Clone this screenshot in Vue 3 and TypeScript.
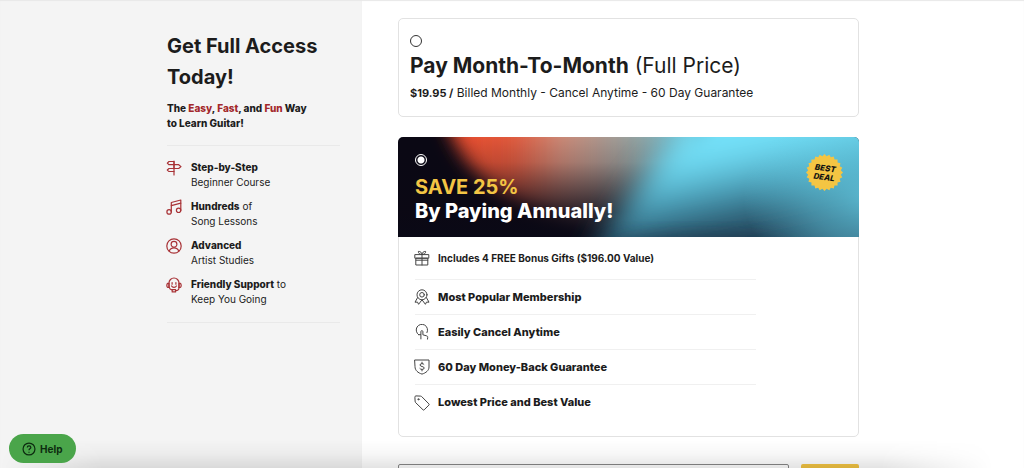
<script setup lang="ts">
import { ref } from 'vue'

interface Feature { icon: string; strong: string; after: string; second: string }

const plan = ref<'monthly' | 'annual'>('annual')
const email = ref('')

const features: Feature[] = [
  { icon: 'signpost', strong: 'Step-by-Step', after: '', second: 'Beginner Course' },
  { icon: 'music', strong: 'Hundreds', after: ' of', second: 'Song Lessons' },
  { icon: 'person', strong: 'Advanced', after: '', second: 'Artist Studies' },
  { icon: 'support', strong: 'Friendly Support', after: ' to', second: 'Keep You Going' },
]

const perks = [
  { icon: 'gift', text: 'Includes 4 FREE Bonus Gifts ($196.00 Value)' },
  { icon: 'ribbon', text: 'Most Popular Membership' },
  { icon: 'tap', text: 'Easily Cancel Anytime' },
  { icon: 'shield', text: '60 Day Money-Back Guarantee' },
  { icon: 'tag', text: 'Lowest Price and Best Value' },
]

const icons: Record<string, string[]> = {
  signpost: [
    'M8 1v14', 'M8 1.5H3L1.3 3.1 3 4.7h5z', 'M8 4.7h4.7L15 6.6l-2.3 1.9H8z', 'M8 8.5H3L1.3 10 3 11.5h5',
  ],
  music: [
    'M5.3 13V3.5L14.8 1v10.5', 'M5.3 6.6l9.5-2.5', 'M5.3 12.9a2.2 2.2 0 1 1-4.4 0 2.2 2.2 0 0 1 4.4 0z',
    'M14.8 11.3a2.2 2.2 0 1 1-4.4 0 2.2 2.2 0 0 1 4.4 0z',
  ],
  person: [
    'M15.2 8A7.2 7.2 0 1 1 .8 8a7.2 7.2 0 0 1 14.4 0z', 'M10.9 6.3a2.9 2.9 0 1 1-5.8 0 2.9 2.9 0 0 1 5.8 0z',
    'M3.3 13.2c.7-2.3 2.5-3.3 4.7-3.3s4 1 4.7 3.3',
  ],
  support: [
    'M3 10.5V6a5 5 0 0 1 10 0v4.5', 'M3 6.3H1.8Q.8 7 .8 8.4t1 2.1H3z', 'M13 6.3h1.2q1 .7 1 2.1t-1 2.1H13z',
    'M6.1 5.5v1.7M9.9 5.5v1.7', 'M5.6 9c.9 1.8 3.9 1.8 4.8 0', 'M3.2 10.3c.4 1.4 1.3 2.2 2.8 2.6',
    'M13 10.5c0 2-1.4 3.2-3.4 3.2', 'M6.2 12.6h3.4v2.3H6.2z',
  ],
  gift: [
    'M1.2 4.6h13.6v3.6H1.2z', 'M2.2 8.2h11.6V15H2.2z', 'M8 4.6V15', 'M2.2 10.2h11.6',
    'M8 4.4C5.6 4.4 4.2 3.4 4.4 1.4 6.4 1.3 7.8 2.4 8 4.4z', 'M8 4.4c2.4 0 3.8-1 3.6-3-2-.1-3.4 1-3.6 3z',
  ],
  ribbon: [
    'M13 5.8a5 5 0 1 1-10 0 5 5 0 0 1 10 0z', 'M10.3 5.8a2.3 2.3 0 1 1-4.6 0 2.3 2.3 0 0 1 4.6 0z',
    'M3.6 8.6L1 13.2l2.5-.1 1.1 2.2L8 10.8l3.4 4.5 1.1-2.2 2.5.1-2.6-4.6',
  ],
  tap: [
    'M4.6 10.7A5.7 5.7 0 1 1 13 8.6', 'M4.6 10.7H6.5',
    'M6.9 14.9V7.6c0-1.3 2-1.3 2 0v3.2l3.8 1.1c.9.3 1.1.8 1 1.6l-.2 1.6',
  ],
  shield: [
    'M1 1h14v7c0 3.4-3 5.9-7 7.1C4 13.9 1 11.4 1 8z', 'M10 5.3C9.6 4.4 6 4.1 6 6c0 2 4.2 1 4.2 3 0 2-3.9 1.7-4.4.6',
    'M8 3.2v1.3M8 10.6v1.3',
  ],
  tag: [
    'M.9 1.9Q.9.9 1.9.9l4.6.2q.7 0 1.2.5l7.2 7.3q.6.6 0 1.2l-4.7 4.7q-.6.6-1.2 0L1.6 7.6q-.5-.5-.5-1.2z',
    'M5 4.3a.6.6 0 1 1-1.2 0 .6.6 0 0 1 1.2 0z',
  ],
}

const sealPoints = Array.from({ length: 48 }, (_, i) => {
  const r = i % 2 ? 16 : 18
  const a = (i * Math.PI) / 24
  return `${(18 + r * Math.cos(a)).toFixed(2)},${(18 + r * Math.sin(a)).toFixed(2)}`
}).join(' ')
</script>

<template>
  <div class="page">
    <aside class="side">
      <div class="side-inner">
        <h1>Get Full Access Today!</h1>
        <p class="lead">The <em>Easy</em>, <em>Fast</em>, and <em>Fun</em> Way<br>to Learn Guitar!</p>
        <ul class="features">
          <li v-for="f in features" :key="f.icon">
            <svg class="icon" viewBox="0 0 16 16" aria-hidden="true">
              <path v-for="d in icons[f.icon]" :key="d" :d="d" />
            </svg>
            <span><strong>{{ f.strong }}</strong>{{ f.after }}<br>{{ f.second }}</span>
          </li>
        </ul>
      </div>
    </aside>

    <main class="main">
      <form class="plans" @submit.prevent>
        <label class="card monthly">
          <input v-model="plan" type="radio" name="plan" value="monthly">
          <span class="title"><strong>Pay Month-To-Month</strong> (Full Price)</span>
          <span class="billing"><strong>$19.95 /</strong> Billed Monthly - Cancel Anytime - 60 Day Guarantee</span>
        </label>

        <section class="card annual">
          <label class="banner">
            <svg class="glow" viewBox="0 0 461 100" preserveAspectRatio="none" aria-hidden="true">
              <defs>
                <linearGradient id="warm" gradientUnits="userSpaceOnUse" x1="50" y1="0" x2="280" y2="0">
                  <stop offset="0" stop-color="#e8492a" />
                  <stop offset=".28" stop-color="#e0593c" />
                  <stop offset=".5" stop-color="#c98a78" />
                  <stop offset=".8" stop-color="#95a09e" />
                  <stop offset="1" stop-color="#72aebb" />
                </linearGradient>
                <linearGradient id="warm-fade" x1="0" y1="0" x2="0" y2="1">
                  <stop offset="0" stop-color="#0b0814" stop-opacity="0" />
                  <stop offset=".25" stop-color="#0b0814" stop-opacity=".15" />
                  <stop offset=".75" stop-color="#0b0814" stop-opacity=".82" />
                  <stop offset="1" stop-color="#0a0916" stop-opacity=".98" />
                </linearGradient>
                <linearGradient id="cool" gradientUnits="userSpaceOnUse" x1="290" y1="0" x2="310" y2="100">
                  <stop offset="0" stop-color="#76e3fb" />
                  <stop offset=".25" stop-color="#70dcf4" />
                  <stop offset=".6" stop-color="#4a9cb5" />
                  <stop offset=".85" stop-color="#2f637a" />
                  <stop offset="1" stop-color="#28495e" />
                </linearGradient>
                <radialGradient id="right-light">
                  <stop offset="0" stop-color="#66d0e8" stop-opacity=".8" />
                  <stop offset=".5" stop-color="#66d0e8" stop-opacity=".45" />
                  <stop offset="1" stop-color="#66d0e8" stop-opacity="0" />
                </radialGradient>
                <filter id="soft" x="-30%" y="-50%" width="160%" height="200%"><feGaussianBlur stdDeviation="9" /></filter>
                <filter id="softer" x="-60%" y="-60%" width="220%" height="220%"><feGaussianBlur stdDeviation="14" /></filter>
              </defs>
              <rect width="461" height="100" fill="#0a0814" />
              <path d="M44-30C54 14 82 50 125 68s90 40 180 50V-30z" fill="url(#warm)" filter="url(#soft)" />
              <rect width="461" height="100" fill="url(#warm-fade)" />
              <path d="M325-50C278 2 236 45 176 145H540V-50z" fill="url(#cool)" filter="url(#softer)" />
              <ellipse cx="305" cy="112" rx="95" ry="14" fill="#1d2e42" opacity=".55" filter="url(#soft)" />
              <ellipse cx="475" cy="60" rx="130" ry="90" fill="url(#right-light)" />
            </svg>
            <input v-model="plan" type="radio" name="plan" value="annual">
            <span class="save">SAVE 25%</span>
            <span class="title-annual">By Paying Annually!</span>
            <span class="seal">
              <svg viewBox="0 0 36 36" aria-hidden="true"><polygon :points="sealPoints" /></svg>
              <span class="seal-text">BEST<br>DEAL</span>
            </span>
          </label>
          <ul class="perks">
            <li v-for="p in perks" :key="p.icon" :class="p.icon">
              <svg class="icon" viewBox="0 0 16 16" aria-hidden="true">
                <path v-for="d in icons[p.icon]" :key="d" :d="d" />
              </svg>
              <span>{{ p.text }}</span>
            </li>
          </ul>
        </section>

        <div class="signup">
          <input v-model="email" type="email" aria-label="Email address">
          <button type="submit" aria-label="Continue"></button>
        </div>
      </form>
    </main>

    <div class="edge" aria-hidden="true"></div>
    <button class="help" type="button">
      <svg viewBox="0 0 16 16" aria-hidden="true">
        <circle cx="8" cy="8" r="6.8" />
        <path d="M6 6.3c.1-2.6 4.1-2.5 4.1 0 0 1.5-2.1 1.5-2.1 3M8 11v1.3" />
      </svg>
      Help
    </button>
  </div>
</template>

<style>
body {
  margin: 0;
  background: #fff;
}
</style>

<style scoped>
.page {
  display: grid;
  grid-template-columns: calc(50% - 150px) 1fr;
  height: 100vh;
  overflow: hidden;
  font-family: Inter, "Liberation Sans", sans-serif;
  color: #1c1c1c;
}
.page,
.side {
  box-shadow: inset 0 1px 1px #e8e8e8;
}
* {
  box-sizing: border-box;
}
h1, p, ul {
  margin: 0;
  padding: 0;
}
ul {
  list-style: none;
}
strong {
  font-weight: 700;
}
.icon {
  flex: none;
  width: 16px;
  height: 16px;
  fill: none;
  stroke: #444;
  stroke-width: 1;
  stroke-linejoin: round;
  stroke-linecap: round;
}
.side {
  display: flex;
  justify-content: flex-end;
  padding: 31px 22px 0 16px;
  background: #f4f4f4;
}
.side-inner {
  width: 173px;
}
h1 {
  font-size: 20px;
  line-height: 31px;
  font-weight: 700;
}
.lead {
  margin-top: 8px;
  font-size: 10px;
  line-height: 15px;
  font-weight: 800;
}
.lead em {
  font-style: normal;
  color: #a3282b;
}
.features {
  display: flex;
  flex-direction: column;
  gap: 9px;
  margin-top: 14px;
  padding: 14px 0 15px;
  border-top: 1px solid #e9e9e9;
  border-bottom: 1px solid #e9e9e9;
}
.features li {
  display: flex;
  gap: 9px;
  font-size: 10px;
  line-height: 15px;
}
.features strong {
  font-weight: 800;
}
.features .icon {
  margin-left: -1px;
  stroke: #a83236;
  stroke-width: 1.2;
}
.main {
  padding: 18px 36px 0;
}
.plans {
  max-width: 461px;
}
.card {
  display: block;
  border: 1px solid #e2e2e2;
  border-radius: 5px;
}
input[type="radio"] {
  display: block;
  appearance: none;
  width: 12px;
  height: 12px;
  margin: 0;
  border: 1px solid #333;
  border-radius: 50%;
}
.monthly {
  padding: 16px 11px 15px;
}
.title {
  display: block;
  margin-top: 4px;
  font-size: 21px;
  line-height: 30px;
}
.billing {
  display: block;
  margin-top: 4px;
  font-size: 12px;
  line-height: 16px;
}
.billing strong {
  font-size: 11px;
}
.annual {
  margin-top: 20px;
}
.banner {
  position: relative;
  display: block;
  margin: -1px -1px 0;
  padding: 17px 17px 14px;
  border-radius: 5px 5px 0 0;
  overflow: hidden;
  isolation: isolate;
}
.glow {
  position: absolute;
  inset: 0;
  z-index: -1;
  width: 100%;
  height: 100%;
}
.banner input[type="radio"] {
  border-color: #fff;
}
.banner input:checked {
  background: radial-gradient(circle, #fff 3px, transparent 4px);
}
.monthly input:checked {
  background: radial-gradient(circle, #333 3px, transparent 4px);
}
.save,
.title-annual {
  display: block;
  font-size: 20px;
  line-height: 24px;
  font-weight: 800;
  color: #fff;
}
.save {
  margin-top: 9px;
  font-weight: 700;
  color: #f3c544;
}
.seal {
  position: absolute;
  top: 17px;
  right: 16px;
  display: grid;
  place-items: center;
  width: 37px;
  height: 37px;
}
.seal svg {
  grid-area: 1 / 1;
  width: 100%;
  height: 100%;
  fill: #f4c543;
}
.seal-text {
  grid-area: 1 / 1;
  z-index: 1;
  font-size: 8px;
  line-height: 9px;
  font-weight: 800;
  font-style: italic;
  text-align: center;
  color: #111;
  transform: rotate(8deg);
}
.perks {
  width: 341px;
  max-width: calc(100% - 32px);
  margin-left: 16px;
  padding-bottom: 16px;
}
.perks li {
  display: flex;
  align-items: center;
  gap: 8px;
  height: 35px;
  border-bottom: 1px solid #f0f0f0;
  font-size: 11px;
  line-height: 17px;
  font-weight: 800;
}
.perks .icon {
  margin-left: -1px;
}
.perks .gift {
  height: 43px;
  font-size: 10px;
  font-weight: 700;
}
.perks li:last-child {
  border-bottom: 0;
}
.signup {
  display: flex;
  gap: 12px;
  margin-top: 27px;
}
.signup input {
  flex: 1;
  min-width: 0;
  height: 36px;
  padding: 0 12px;
  border: 1px solid #888;
  border-radius: 2px;
  background: #fff;
}
.signup button {
  width: 58px;
  height: 36px;
  border: 0;
  border-radius: 2px;
  background: #f3c544;
}
.edge {
  position: fixed;
  inset: auto 0 0;
  height: 28px;
  background: linear-gradient(rgba(0, 0, 0, 0), rgba(0, 0, 0, .03) 50%, rgba(0, 0, 0, .11));
  -webkit-mask-image: linear-gradient(90deg, transparent, #000 10%, #000 86%, transparent 97%);
  mask-image: linear-gradient(90deg, transparent, #000 10%, #000 86%, transparent 97%);
  pointer-events: none;
}
.help {
  position: fixed;
  left: 9px;
  bottom: 5px;
  display: flex;
  align-items: center;
  gap: 4px;
  height: 29px;
  padding: 0 14px 0 13px;
  border: 0;
  border-radius: 15px;
  background: #4aa54a;
  color: #0d2c10;
  font: 700 10px Inter, "Liberation Sans", sans-serif;
}
.help svg {
  width: 14px;
  height: 14px;
  fill: none;
  stroke: currentColor;
  stroke-width: 1.4;
}
</style>
